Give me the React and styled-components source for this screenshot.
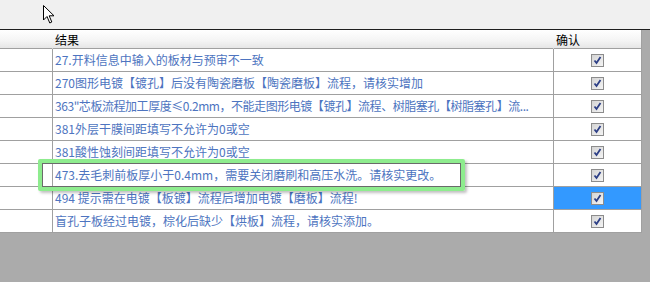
import React from 'react';
import styled, { createGlobalStyle } from 'styled-components';

const GlobalStyle = createGlobalStyle`
    html, body {
        margin: 0;
        padding: 0;
        background: #ababab;
    }
    body {
        font-family: "Noto Sans CJK SC", "Liberation Sans", sans-serif;
        font-size: 12px;
    }
`;

const Page = styled.div`
    position: relative;
    width: 650px;
    height: 282px;
    overflow: hidden;
    background: #ababab;
    display: flex;
    flex-direction: column;
`;

const TopBar = styled.div`
    height: 29px;
    background: #f0f0f0;
    border-bottom: 1px solid #1e1e1e;
    flex-shrink: 0;
`;

const Cursor = styled.svg`
    position: absolute;
    left: 42px;
    top: 4px;
`;

const Grid = styled.div`
    width: 642px;
    display: grid;
    grid-template-columns: 53px 501px 88px;
    background: #fff;
`;

const HeadCell = styled.div`
    height: 19px;
    border-bottom: 1px solid #a0a0a0;
    border-right: 1px solid ${(p) => (p.$last ? '#a0a0a0' : 'transparent')};
    background: linear-gradient(#ffffff, #f4f4f4 60%, #e6e6e6);
    color: #000;
    line-height: 19px;
    padding-left: 2px;
    box-sizing: border-box;
    font-size: 12px;
`;

const Cell = styled.div`
    height: 23px;
    border-bottom: 1px solid #a0a0a0;
    border-right: 1px solid #a0a0a0;
    box-sizing: border-box;
    background: ${(p) => (p.$selected ? '#3399ff' : '#fff')};
`;

const TextCell = styled(Cell)`
    padding: 0 4px 0 2px;
    color: #4d74c0;
    line-height: 22px;
    white-space: nowrap;
    overflow: hidden;
    letter-spacing: ${(p) => (p.$tight ? '-0.45px' : '0')};
`;

const CheckCell = styled(Cell)`
    display: flex;
    align-items: center;
    justify-content: center;
`;

const Box = styled.span`
    width: 11px;
    height: 11px;
    border: 1px solid #8c8c8c;
    background: linear-gradient(135deg, #d4d4d4, #f4f4f4);
    display: flex;
    align-items: center;
    justify-content: center;
`;

const Highlight = styled.div`
    position: absolute;
    left: 38px;
    top: 159px;
    width: 427px;
    height: 32px;
    box-sizing: border-box;
    border: 4px solid #8eec8e;
    border-radius: 2px;
    box-shadow: inset 0 0 0 1px #6a6a6a, 2px 2px 3px rgba(0, 0, 0, 0.25);
`;

const rows = [
    { text: '27.开料信息中输入的板材与预审不一致' },
    { text: '270图形电镀【镀孔】后没有陶瓷磨板【陶瓷磨板】流程，请核实增加' },
    { text: '363"芯板流程加工厚度≤0.2mm，不能走图形电镀【镀孔】流程、树脂塞孔【树脂塞孔】流...', tight: true },
    { text: '381外层干膜间距填写不允许为0或空' },
    { text: '381酸性蚀刻间距填写不允许为0或空' },
    { text: '473.去毛刺前板厚小于0.4mm，需要关闭磨刷和高压水洗。请核实更改。' },
    { text: '494 提示需在电镀【板镀】流程后增加电镀【磨板】流程!' },
    { text: '盲孔子板经过电镀，棕化后缺少【烘板】流程，请核实添加。' },
];

const Check = () => (
    <Box>
        <svg width="9" height="9" viewBox="0 0 9 9">
            <path d="M1.5 4.5 L3.5 7 L7.5 1" fill="none" stroke="#2d3f86" strokeWidth="1.8" />
        </svg>
    </Box>
);

const App = () => {
    return (
        <Page>
            <GlobalStyle />
            <TopBar />
            <Grid>
                <HeadCell />
                <HeadCell>结果</HeadCell>
                <HeadCell $last>确认</HeadCell>
                {rows.map((row, i) => (
                    <React.Fragment key={i}>
                        <Cell />
                        <TextCell $tight={row.tight}>{row.text}</TextCell>
                        <CheckCell $selected={i === 6}>
                            <Check />
                        </CheckCell>
                    </React.Fragment>
                ))}
            </Grid>
            <Highlight />
            <Cursor width="14" height="21" viewBox="0 0 14 21">
                <path d="M1.5 1.5 L1.5 16 L5 12.5 L7.8 19 L9.8 18 L7.2 11.8 L12 11.8 Z" fill="#fff" stroke="#000" strokeWidth="1" />
            </Cursor>
        </Page>
    );
};

export default App;
